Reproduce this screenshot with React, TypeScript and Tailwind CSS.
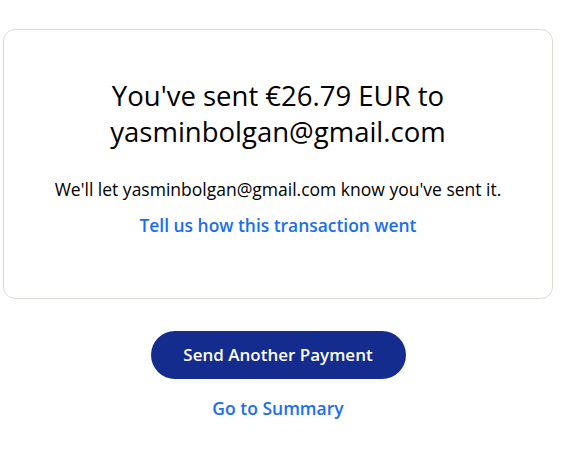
export default function App() {
  return (
    <div className="min-h-[471px] w-[580px] bg-white font-['Open_Sans','Lato',sans-serif] text-[#001435]">
      <div className="pt-[29px] pl-[3px] w-[553px]">
        {/* confirmation card */}
        <div className="flex h-[270px] flex-col items-center rounded-[12px] border border-[#dcdad2] px-6 pt-[48px]">
          <h1 className="text-center text-[27.5px] leading-[36px] text-black">
            You've sent €26.79 EUR to
            <br />
            yasminbolgan@gmail.com
          </h1>
          <p className="mt-[27px] text-[17.5px] leading-[24px] text-black">
            We'll let yasminbolgan@gmail.com know you've sent it.
          </p>
          <a className="mt-[12px] text-[17.4px] font-semibold leading-[24px] text-[#1a6ef0]">
            Tell us how this transaction went
          </a>
        </div>

        <div className="mt-[32px] flex flex-col items-center">
          <button className="h-[48px] w-[255px] rounded-full bg-[#142c8e] text-[17px] font-semibold text-white">
            Send Another Payment
          </button>
          <a className="mt-[17px] text-[17.5px] font-semibold leading-[24px] text-[#1a6ef0]">
            Go to Summary
          </a>
        </div>
      </div>
    </div>
  )
}
